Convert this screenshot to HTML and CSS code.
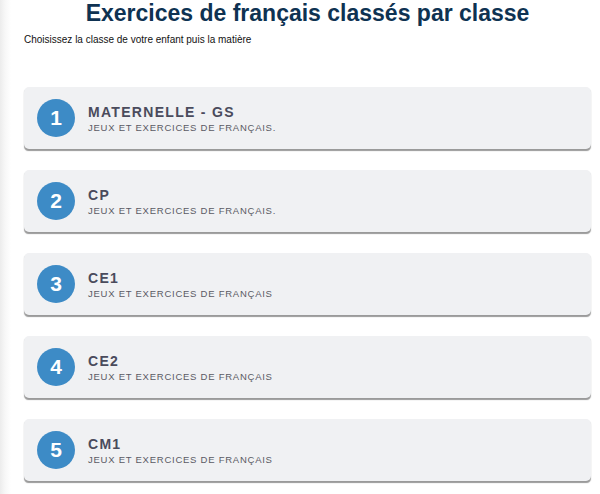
FILE: index.html
```html
<!DOCTYPE html>
<html lang="fr">
<head>
<meta charset="utf-8">
<title>Exercices de français classés par classe</title>
<link rel="stylesheet" href="styles.css">
</head>
<body>
<div class="page">
  <h1 class="title">Exercices de français classés par classe</h1>
  <p class="intro">Choisissez la classe de votre enfant puis la matière</p>
  <ul class="levels">
    <li class="card"><span class="num">1</span><div class="txt"><div class="name">MATERNELLE - GS</div><div class="sub">JEUX ET EXERCICES DE FRANÇAIS.</div></div></li>
    <li class="card"><span class="num">2</span><div class="txt"><div class="name">CP</div><div class="sub">JEUX ET EXERCICES DE FRANÇAIS.</div></div></li>
    <li class="card"><span class="num">3</span><div class="txt"><div class="name">CE1</div><div class="sub">JEUX ET EXERCICES DE FRANÇAIS</div></div></li>
    <li class="card"><span class="num">4</span><div class="txt"><div class="name">CE2</div><div class="sub">JEUX ET EXERCICES DE FRANÇAIS</div></div></li>
    <li class="card"><span class="num">5</span><div class="txt"><div class="name">CM1</div><div class="sub">JEUX ET EXERCICES DE FRANÇAIS</div></div></li>
  </ul>
</div>
</body>
</html>
```
FILE: styles.css
```css
html, body {
  margin: 0;
  padding: 0;
}
body {
  font-family: "Liberation Sans", Arial, sans-serif;
  background: linear-gradient(to right, #ececec 0px, #f7f7f7 5px, #ffffff 11px, #ffffff 100%);
  height: 494px;
  overflow: hidden;
}
.page {
  padding: 0 9px 0 24px;
}
.title {
  margin: 0;
  text-align: center;
  font-size: 23px;
  line-height: 27px;
  font-weight: bold;
  color: #0e3252;
}
.intro {
  margin: 7px 0 0;
  font-size: 10px;
  line-height: 12px;
  color: #111;
}
.levels {
  list-style: none;
  margin: 41px 0 0;
  padding: 0;
  display: flex;
  flex-direction: column;
  gap: 21px;
}
.card {
  height: 62px;
  background: #f0f1f3;
  border-radius: 5px;
  box-shadow: 0 2px 1px -0.5px #9a9a9a;
  display: flex;
  align-items: center;
  padding-left: 13px;
  gap: 13px;
}
.num {
  width: 38px;
  height: 38px;
  border-radius: 50%;
  background: #3d8bc6;
  color: #fff;
  font-weight: bold;
  font-size: 21px;
  display: flex;
  align-items: center;
  justify-content: center;
  flex-shrink: 0;
}
.txt {
  display: flex;
  flex-direction: column;
  gap: 2px;
  margin-top: 1px;
}
.name {
  font-size: 14px;
  line-height: 16px;
  font-weight: bold;
  letter-spacing: 1.3px;
  color: #4a4b5c;
}
.sub {
  font-size: 9.5px;
  line-height: 12px;
  letter-spacing: 0.75px;
  color: #5a5a64;
}
```
